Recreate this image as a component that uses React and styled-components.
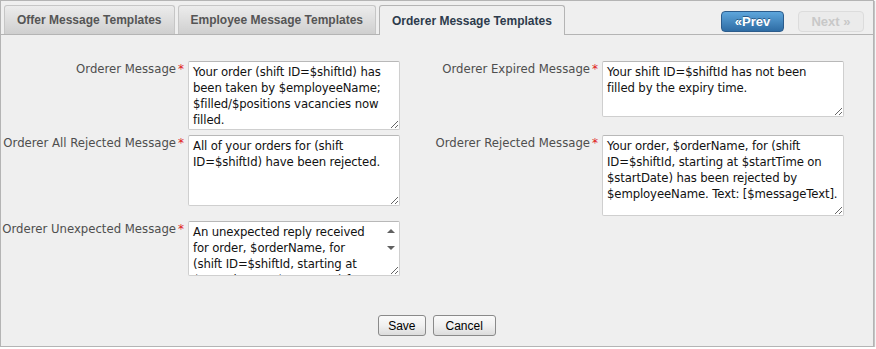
import React from "react";
import styled, { createGlobalStyle } from "styled-components";

const Global = createGlobalStyle`
  html, body { margin: 0; padding: 0; background: #fff; }
  body { font-family: "DejaVu Sans", Verdana, sans-serif; }
`;

const Panel = styled.div`
  width: 872px;
  height: 345px;
  border: 1px solid #b4b4b4;
  background: #efefef;
  box-shadow: 1px 1px 1px #c4c4c4;
  display: flex;
  flex-direction: column;
`;

const TabBar = styled.div`
  display: flex;
  align-items: flex-end;
  padding: 0 9px 0 3px;
  border-bottom: 1px solid #b4b4b4;
  box-sizing: border-box;
  height: 34px;
`;

const Tab = styled.div`
  box-sizing: border-box;
  padding: 0 12px;
  margin-right: 3px;
  display: flex;
  align-items: center;
  font-family: "Liberation Sans", Arial, sans-serif;
  font-weight: bold;
  font-size: 12px;
  color: ${(p) => (p.$active ? "#2d3b4c" : "#555")};
  border: 1px solid ${(p) => (p.$active ? "#b4b4b4" : "#c6c6c6")};
  border-bottom: none;
  border-radius: 3px 3px 0 0;
  background: ${(p) =>
    p.$active ? "#efefef" : "linear-gradient(#ececec, #cfcfcf)"};
  margin-bottom: ${(p) => (p.$active ? "-1px" : "0")};
  height: ${(p) => (p.$active ? "30px" : "29px")};
`;

const Spacer = styled.div`
  flex: 1;
`;

const NavButton = styled.button`
  align-self: flex-start;
  margin-top: 10px;
  height: 21px;
  box-sizing: border-box;
  padding: 0;
  width: ${(p) => p.$w}px;
  margin-left: ${(p) => p.$ml}px;
  font-family: "Liberation Sans", Arial, sans-serif;
  font-weight: bold;
  font-size: 13px;
  border-radius: 4px;
  color: ${(p) => (p.$disabled ? "#c8c8c8" : "#fff")};
  border: 1px solid ${(p) => (p.$disabled ? "#dcdcdc" : "#2c5c8c")};
  background: ${(p) =>
    p.$disabled ? "#ebebeb" : "linear-gradient(#5ea6dc, #2e6ca4)"};
  text-shadow: ${(p) => (p.$disabled ? "none" : "0 -1px 0 #2a5b88")};
`;

const Body = styled.div`
  flex: 1;
  display: flex;
  flex-direction: column;
  padding-top: 26px;
`;

const FormGrid = styled.div`
  display: grid;
  grid-template-columns: 183px 212px 194px 242px;
  column-gap: 4px;
  row-gap: 5px;
  align-items: start;
`;

const Label = styled.label`
  text-align: right;
  font-size: 11.7px;
  line-height: 15px;
  color: #4e4e4e;
  white-space: nowrap;
  padding-top: 1px;
`;

const Star = styled.span`
  color: #e02020;
  margin-left: 2px;
  font-size: 12px;
`;

const AreaWrap = styled.div`
  position: relative;
`;

const Area = styled.textarea`
  display: block;
  box-sizing: border-box;
  width: 100%;
  height: ${(p) => p.$h}px;
  margin: 0;
  padding: 2px ${(p) => p.$pr}px 2px 4px;
  border: 1px solid #cfcfcf;
  border-top-color: #b8b8b8;
  border-radius: 2px;
  background: #fff;
  font-family: "DejaVu Sans", Verdana, sans-serif;
  font-size: 11.7px;
  letter-spacing: -0.12px;
  line-height: 16px;
  color: #111;
  outline: none;
`;

const ScrollBar = styled.div`
  position: absolute;
  top: 1px;
  right: 1px;
  width: 17px;
  display: flex;
  flex-direction: column;
  background: #fff;
  pointer-events: none;
`;

const Arrow = styled.div`
  height: 17px;
  display: flex;
  align-items: center;
  justify-content: center;

  &::before {
    content: "";
    width: 0;
    height: 0;
    border-left: 4px solid transparent;
    border-right: 4px solid transparent;
    ${(p) =>
      p.$down
        ? "border-top: 4px solid #606060;"
        : "border-bottom: 4px solid #606060;"}
  }
`;

const Footer = styled.div`
  margin-top: auto;
  display: flex;
  justify-content: center;
  gap: 7px;
  padding-bottom: 10px;
`;

const FormButton = styled.button`
  height: 21px;
  box-sizing: border-box;
  padding: 0 ${(p) => p.$px}px;
  font-family: "Liberation Sans", Arial, sans-serif;
  font-size: 12px;
  color: #000;
  border: 1px solid #8a8a8a;
  border-radius: 3px;
  background: linear-gradient(#fafafa 0%, #f0f0f0 50%, #dcdcdc 100%);
`;

const fields = [
  {
    label: "Orderer Message",
    h: 69,
    pr: 2,
    text: "Your order (shift ID=$shiftId) has been taken by $employeeName; $filled/$positions vacancies now filled.",
  },
  {
    label: "Orderer Expired Message",
    h: 56,
    pr: 12,
    text: "Your shift ID=$shiftId has not been filled by the expiry time.",
  },
  {
    label: "Orderer All Rejected Message",
    h: 71,
    pr: 2,
    text: "All of your orders for (shift ID=$shiftId) have been rejected.",
  },
  {
    label: "Orderer Rejected Message",
    h: 81,
    pr: 0,
    text: "Your order, $orderName, for (shift ID=$shiftId, starting at $startTime on $startDate) has been rejected by $employeeName. Text: [$messageText].",
  },
  {
    label: "Orderer Unexpected Message",
    h: 55,
    pr: 22,
    scroll: true,
    text: "An unexpected reply received for order, $orderName, for (shift ID=$shiftId, starting at $startTime on $startDate) from $employeeName. Text: [$messageText].",
  },
];

export default function App() {
  return (
    <>
      <Global />
      <Panel>
        <TabBar>
          <Tab>Offer Message Templates</Tab>
          <Tab>Employee Message Templates</Tab>
          <Tab $active>Orderer Message Templates</Tab>
          <Spacer />
          <NavButton $w={63} $ml={0}>«Prev</NavButton>
          <NavButton $w={66} $ml={14} $disabled>
            Next »
          </NavButton>
        </TabBar>
        <Body>
          <FormGrid>
            {fields.map((f) => (
              <React.Fragment key={f.label}>
                <Label>
                  {f.label}
                  <Star>*</Star>
                </Label>
                <AreaWrap>
                  <Area $h={f.h} $pr={f.pr} defaultValue={f.text} />
                  {f.scroll && (
                    <ScrollBar>
                      <Arrow />
                      <Arrow $down />
                    </ScrollBar>
                  )}
                </AreaWrap>
              </React.Fragment>
            ))}
          </FormGrid>
          <Footer>
            <FormButton $px={9}>Save</FormButton>
            <FormButton $px={12}>Cancel</FormButton>
          </Footer>
        </Body>
      </Panel>
    </>
  );
}
